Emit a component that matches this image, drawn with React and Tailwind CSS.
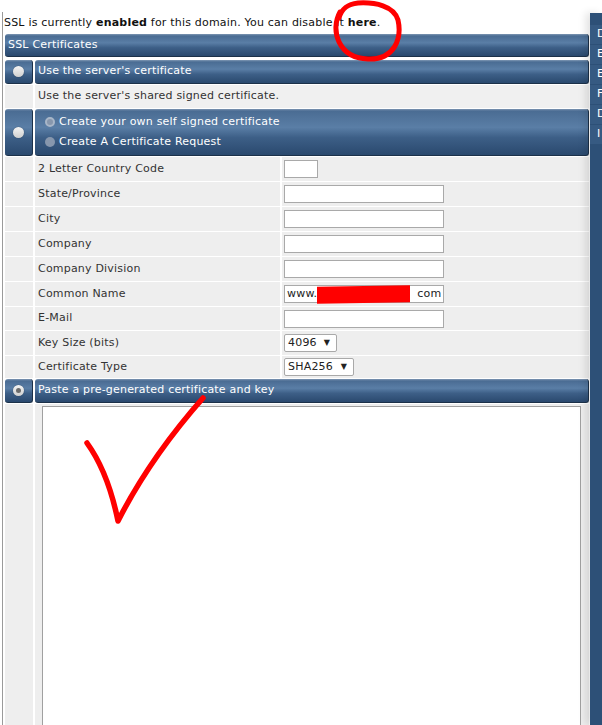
import React from 'react';

const bar =
    'bg-[linear-gradient(to_bottom,#7f97b3_0px,#4a6c93_2px,#5a7ea6_40%,#3d5f87_62%,#2a496e_100%)] border-b border-r border-[#1c3149] rounded-[3px] text-white';

const Radio = ({ checked }) => (
    <span className="inline-flex items-center justify-center w-[11px] h-[11px] rounded-full bg-[linear-gradient(to_bottom,#f4f4f4,#cfcfcf)] shadow-[0_0_1px_rgba(0,0,0,0.5)]">
        {checked && <span className="w-[5px] h-[5px] rounded-full bg-[#6b6b6b]" />}
    </span>
);

const SubRadio = ({ ring }) => (
    <span
        className={
            'inline-block w-[10px] h-[10px] rounded-full bg-[#8797ad] ' +
            (ring ? 'border-[2px] border-[#a8b6c8]' : '')
        }
    />
);

const BarRow = ({ children, checked, tall }) => (
    <div className={'flex gap-[2px] ' + (tall ? 'h-[47px]' : 'h-[24px]')}>
        <div className={bar + ' w-[28px] flex items-center justify-center'}>
            <Radio checked={checked} />
        </div>
        <div className={bar + ' flex-1 pl-[3px] flex flex-col justify-center'}>{children}</div>
    </div>
);

const Field = ({ label, children, h = 'h-[24px]' }) => (
    <div className={'flex gap-[2px] ' + h}>
        <div className="w-[28px] bg-[#eeeeee]" />
        <div className="w-[245px] bg-[#eeeeee] pl-[3px] flex items-center text-[#333]">{label}</div>
        <div className="flex-1 bg-[#eeeeee] pl-[2px] flex items-center">{children}</div>
    </div>
);

const Input = ({ w = 'w-[160px]' }) => (
    <input className={w + ' h-[18px] bg-white border border-[#a9a9a9] outline-none'} />
);

const Select = ({ value, w }) => (
    <div className={w + ' h-[18px] bg-white border border-[#a9a9a9] rounded-[2px] flex items-center justify-between pl-[3px] pr-[6px] text-[#222]'}>
        <span>{value}</span>
        <span className="text-[8px]">▼</span>
    </div>
);

export default function App() {
    const side = ['D', 'E', 'E', 'F', 'D', 'I'];
    return (
        <div className="relative w-[602px] h-[725px] overflow-hidden bg-white font-['DejaVu_Sans',Verdana,sans-serif] text-[11px] tracking-[0.2px]">
            <div className="flex">
                <div className="w-[590px] pl-[2px] pt-[12px]">
                    <div className="border-l border-[#9a9a9a] pr-[1px]">
                        <p className="leading-[22px] pl-[1px] text-[#111]">
                            SSL is currently <b>enabled</b> for this domain. You can disable it <b>here</b>.
                        </p>
                        <div className="pl-[2px] flex flex-col">
                            <div className={bar + ' h-[23px] pl-[3px] flex items-center'}>SSL Certificates</div>
                            <div className="mt-[3px]">
                                <BarRow>Use the server's certificate</BarRow>
                            </div>
                            <div className="flex gap-[2px] h-[23px] mt-px">
                                <div className="w-[28px] bg-[#eeeeee]" />
                                <div className="flex-1 bg-[#f0f0f0] pl-[3px] flex items-center text-[#333]">
                                    Use the server's shared signed certificate.
                                </div>
                            </div>
                            <div className="mt-px">
                                <BarRow tall>
                                    <div className="flex items-center gap-[4px] pl-[7px] h-[20px]">
                                        <SubRadio ring />
                                        <span>Create your own self signed certificate</span>
                                    </div>
                                    <div className="flex items-center gap-[4px] pl-[7px] h-[20px]">
                                        <SubRadio />
                                        <span>Create A Certificate Request</span>
                                    </div>
                                </BarRow>
                            </div>
                            <div className="flex flex-col gap-px mt-px">
                                <Field label="2 Letter Country Code"><Input w="w-[34px]" /></Field>
                                <Field label="State/Province"><Input /></Field>
                                <Field label="City"><Input /></Field>
                                <Field label="Company"><Input /></Field>
                                <Field label="Company Division"><Input /></Field>
                                <Field label="Common Name">
                                    <div className="w-[160px] h-[18px] bg-white border border-[#a9a9a9] flex items-center pl-[2px] text-[#222] whitespace-nowrap">
                                        <span>www.</span>
                                        <span className="inline-block w-[93px] h-[17px] bg-[#ff0000] -skew-y-1" />
                                        <span className="ml-[7px]">com</span>
                                    </div>
                                </Field>
                                <Field label="E-Mail" h="h-[23px]"><Input /></Field>
                                <Field label="Key Size (bits)"><Select value="4096" w="w-[53px]" /></Field>
                                <Field label="Certificate Type" h="h-[22px]"><Select value="SHA256" w="w-[70px]" /></Field>
                            </div>
                            <div className="mt-px">
                                <BarRow checked>Paste a pre-generated certificate and key</BarRow>
                            </div>
                            <div className="flex gap-[2px] mt-px h-[330px]">
                                <div className="w-[28px] bg-[#eeeeee]" />
                                <div className="flex-1 bg-[#eeeeee] pl-[7px] pr-[8px] pt-[2px]">
                                    <textarea className="w-full h-full bg-white border border-[#a0a0a0] resize-none outline-none" />
                                </div>
                            </div>
                        </div>
                    </div>
                </div>
                <div className="w-[12px] h-[712px] mt-[13px] bg-[#2d5077] shadow-[-4px_0_8px_rgba(0,0,0,0.12)] pt-[12px] overflow-hidden">
                    {side.map((l, i) => (
                        <div key={i} className="h-[20px] pl-[7px] flex items-center text-white bg-[#365a82] border-b border-[#2d5077]">
                            {l}
                        </div>
                    ))}
                </div>
            </div>
            <svg className="absolute inset-0 pointer-events-none" width="602" height="725" viewBox="0 0 602 725">
                <path
                    d="M340,12 C330,30 338,58 368,59 C395,60 402,38 398,20 C394,6 375,2 358,3 C348,4 342,8 339,18"
                    fill="none"
                    stroke="#ff0000"
                    strokeWidth="5"
                    strokeLinecap="round"
                />
                <path
                    d="M87,443 Q108,472 118,521 Q150,458 203,398"
                    fill="none"
                    stroke="#ff0000"
                    strokeWidth="5.5"
                    strokeLinecap="round"
                    strokeLinejoin="round"
                />
            </svg>
        </div>
    );
}
